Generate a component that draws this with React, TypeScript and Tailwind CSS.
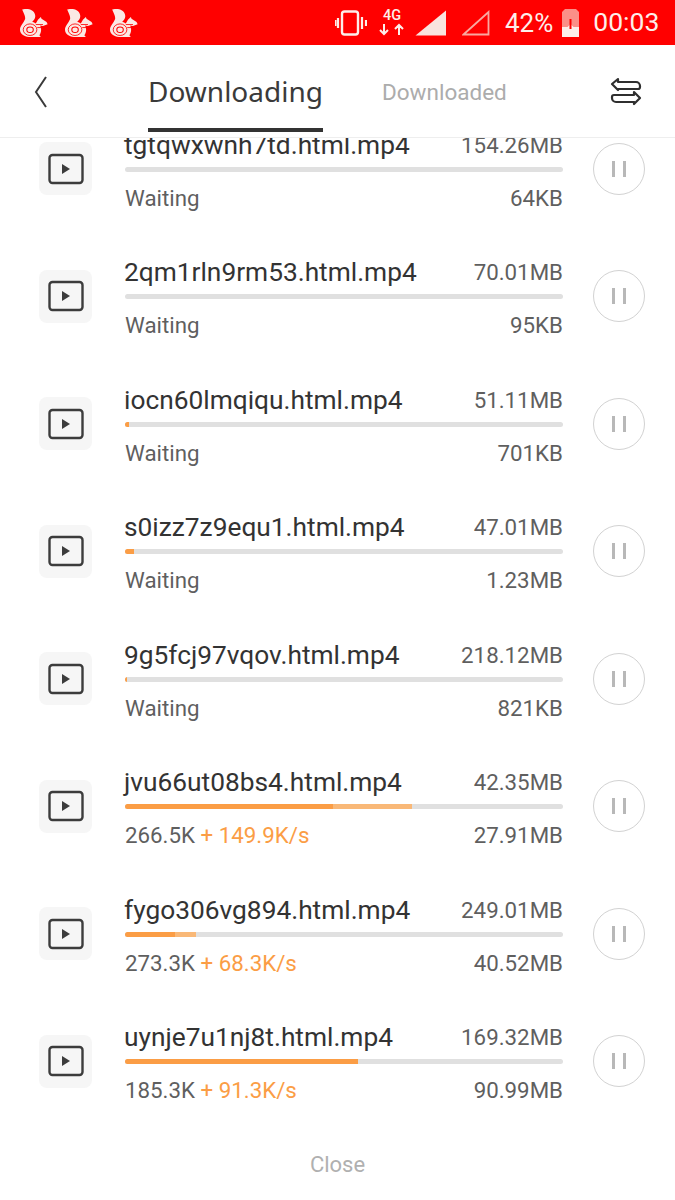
const rows = [
  { name: "tgtqwxwnh7td.html.mp4", size: "154.26MB", left: "Waiting", right: "64KB", solid: 0, hatch: 0 },
  { name: "2qm1rln9rm53.html.mp4", size: "70.01MB", left: "Waiting", right: "95KB", solid: 0, hatch: 0 },
  { name: "iocn60lmqiqu.html.mp4", size: "51.11MB", left: "Waiting", right: "701KB", solid: 4, hatch: 0 },
  { name: "s0izz7z9equ1.html.mp4", size: "47.01MB", left: "Waiting", right: "1.23MB", solid: 9, hatch: 0 },
  { name: "9g5fcj97vqov.html.mp4", size: "218.12MB", left: "Waiting", right: "821KB", solid: 2, hatch: 0 },
  { name: "jvu66ut08bs4.html.mp4", size: "42.35MB", left: "266.5K", speed: "+ 149.9K/s", right: "27.91MB", solid: 208, hatch: 79 },
  { name: "fygo306vg894.html.mp4", size: "249.01MB", left: "273.3K", speed: "+ 68.3K/s", right: "40.52MB", solid: 50, hatch: 21 },
  { name: "uynje7u1nj8t.html.mp4", size: "169.32MB", left: "185.3K", speed: "+ 91.3K/s", right: "90.99MB", solid: 233, hatch: 0 },
];

function Squirrel() {
  return (
    <svg width="28" height="28" viewBox="24 12 78 92" preserveAspectRatio="none" className="shrink-0">
      <path
        d="M30 14C50 6 70 20 66 40 65 46 62 50 58 54 62 55 65 57 68 60L74 47 82 38 84 44 98 55 101 62 88 68 80 66C84 75 84 88 78 98L82 104 58 104C40 106 24 96 24 80 24 68 34 58 38 46 40 36 34 26 30 14Z"
        fill="#fbe9e4"
      />
      <circle cx="52" cy="80" r="19" fill="none" stroke="#ff0000" strokeWidth="2.500" />
      <circle cx="52" cy="80" r="9" fill="none" stroke="#ff0000" strokeWidth="3" />
      <path d="M68 63 88 63M72 73 90 73" stroke="#ff0000" strokeWidth="2.500" fill="none" />
    </svg>
  );
}

function PlayIcon() {
  return (
    <svg width="36" height="32" viewBox="0 0 36 32" fill="none">
      <rect x="1.500" y="2" width="33" height="28" rx="3" stroke="#3c3c3c" strokeWidth="2.400" />
      <path d="M14 11v10l8-5Z" fill="#3c3c3c" />
    </svg>
  );
}

function Row({ r }: { r: (typeof rows)[number] }) {
  return (
    <div className="h-[127.5px] shrink-0 flex items-center pl-[39px]">
      <div className="w-[53px] h-[53px] shrink-0 rounded-lg bg-[#f6f6f6] flex items-center justify-center">
        <PlayIcon />
      </div>
      <div className="w-[438px] ml-[33px] shrink-0 flex flex-col pt-[6px] pb-[1px]">
        <div className="flex items-center justify-between h-[30px]">
          <span className="text-[26.300px] leading-[30px] text-[#333333] whitespace-nowrap -ml-[1px]">{r.name}</span>
          <span className="text-[22.300px] leading-[30px] text-[#5f5f5f]">{r.size}</span>
        </div>
        <div className="mt-[7px] h-[5px] rounded-full bg-[#e0e0e0] overflow-hidden flex">
          {r.solid > 0 && <div className="h-full bg-[#fb9d45]" style={{ width: r.solid }} />}
          {r.hatch > 0 && <div className="h-full bg-[#f9b877]" style={{ width: r.hatch }} />}
        </div>
        <div className="mt-[11px] flex items-center justify-between h-[30px]">
          <span className="text-[22.300px] leading-[30px] text-[#5f5f5f] whitespace-nowrap">
            {r.left}
            {r.speed && <span className="text-[#fb9d45]"> {r.speed}</span>}
          </span>
          <span className="text-[22.300px] leading-[30px] text-[#5f5f5f]">{r.right}</span>
        </div>
      </div>
      <div className="ml-[30px] w-[52px] h-[52px] shrink-0 rounded-full border border-[#d2d2d2] flex items-center justify-center gap-[8px]">
        <div className="w-[3px] h-[16px] bg-[#b8b8b8]" />
        <div className="w-[3px] h-[16px] bg-[#b8b8b8]" />
      </div>
    </div>
  );
}

export default function App() {
  return (
    <div className="w-[675px] h-[1200px] bg-white overflow-hidden flex flex-col font-['Roboto',sans-serif]">
      <div className="h-[45px] shrink-0 bg-[#ff0000] flex items-center pl-[20px] text-[#fdeeea]">
        <div className="flex gap-[17px]">
          <Squirrel />
          <Squirrel />
          <Squirrel />
        </div>
        <svg width="32" height="26" viewBox="0 0 32 26" className="ml-[197px] shrink-0" fill="none">
          <rect x="7" y="1.500" width="16" height="23" rx="2.500" stroke="#fdeeea" strokeWidth="2.400" />
          <path d="M3 8v10M27 7v12M31 10v6" stroke="#fdeeea" strokeWidth="2.200" />
          <path d="M0.800 10v6" stroke="#fdeeea" strokeWidth="1.600" />
        </svg>
        <div className="ml-[12px] w-[26px] flex flex-col items-center shrink-0">
          <span className="text-[14.500px] leading-[14px] font-medium">4G</span>
          <svg width="26" height="13" viewBox="0 0 26 13" fill="none">
            <path d="M5 1v10M1 7l4 4 4-4M20 12V2M16 6l4-4 4 4" stroke="#fdeeea" strokeWidth="2" />
          </svg>
        </div>
        <svg width="32" height="26" viewBox="0 0 32 26" className="ml-[10px] shrink-0">
          <path d="M0.500 25.500 31 0.500v25Z" fill="#f9e3de" />
        </svg>
        <svg width="28" height="26" viewBox="0 0 28 26" className="ml-[15px] shrink-0" fill="none">
          <path d="M1.500 24.500 26.500 2v22.500Z" stroke="#f9a8a0" strokeWidth="1.800" />
        </svg>
        <span className="ml-[15px] text-[26px] leading-none whitespace-nowrap">42%</span>
        <svg width="17" height="28" viewBox="0 0 17 28" className="ml-[9px] shrink-0">
          <path d="M3 0h11l3 3v15H0V3Z" fill="#fb8f88" />
          <path d="M0 18h5.500l3-3 3 3H17v10H0Z" fill="#fdeeea" />
          <path d="M8.500 10v10" stroke="#ff0000" strokeWidth="2" />
        </svg>
        <span className="ml-[14px] text-[26.500px] leading-none whitespace-nowrap">00:03</span>
      </div>

      <div className="h-[93px] shrink-0 bg-white border-b border-[#eeeeee] flex items-start relative z-10">
        <svg width="14" height="34" viewBox="0 0 14 34" className="ml-[34px] mt-[30px] shrink-0" fill="none">
          <path d="M12 2 2 17l10 15" stroke="#3a3a3a" strokeWidth="2" />
        </svg>
        <div className="ml-[100px] w-[175px] h-[87px] shrink-0 flex flex-col items-center">
          <span className="mt-[28px] text-[28px] leading-[36px] text-[#3a3a3a] whitespace-nowrap font-['Noto_Sans',sans-serif]">Downloading</span>
          <div className="mt-auto w-full h-[4px] bg-[#333333]" />
        </div>
        <span className="ml-[59px] mt-[33px] text-[22.500px] leading-[28px] text-[#acacac] whitespace-nowrap">Downloaded</span>
        <svg width="32" height="30" viewBox="0 0 32 30" className="ml-[103px] mt-[32px] shrink-0" fill="none">
          <path d="M8 2 2 7l6 6v-1h20a2 2 0 0 0 2-2V9a4 4 0 0 0-4-4H8Z" stroke="#2f2f2f" strokeWidth="2.200" strokeLinejoin="round" />
          <path d="M24 15l6 6-6 6v-2H6a4 4 0 0 1-4-4v-1a2 2 0 0 1 2-2h20Z" stroke="#2f2f2f" strokeWidth="2.200" strokeLinejoin="round" />
        </svg>
      </div>

      <div className="flex-1 min-h-0 overflow-hidden flex flex-col">
        <div className="-mt-[33px] flex flex-col">
          {rows.map((r) => (
            <Row key={r.name} r={r} />
          ))}
        </div>
      </div>

      <div className="h-[72px] shrink-0 flex items-center justify-center text-[22px] text-[#b0b0b0]">Close</div>
    </div>
  );
}
